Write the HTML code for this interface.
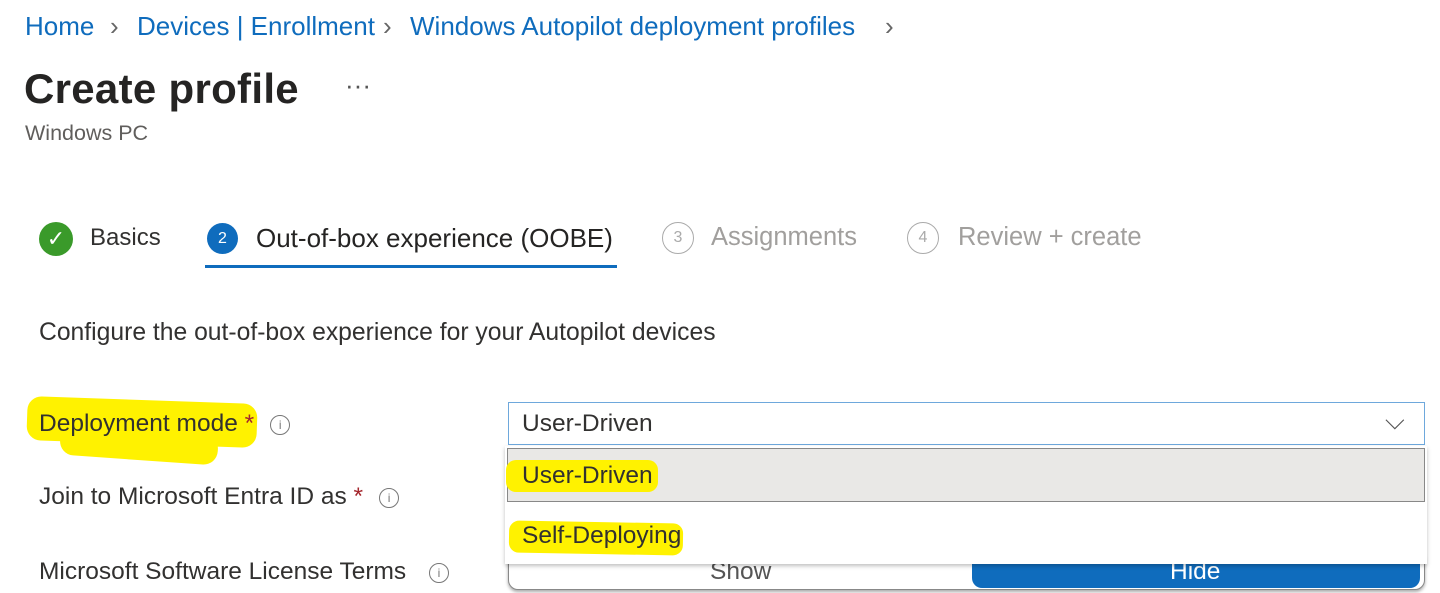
<!DOCTYPE html>
<html><head><style>
body{margin:0;width:1440px;height:593px;overflow:hidden;background:#fff;font-family:"Liberation Sans",sans-serif;position:relative;color:#323130}
.a{position:absolute;white-space:nowrap}
.bc{top:11px;font-size:26px;color:#0f6cbd}
.sep{top:11px;font-size:26px;color:#666}
.hl{position:absolute;background:#fff200;border-radius:14px}
.info{display:inline-block;width:18px;height:18px;border:1.5px solid #777;border-radius:50%;vertical-align:middle;margin-left:16px;font-size:12px;text-align:center;line-height:18px;color:#777}
.t{font-size:24.5px}
</style></head><body>
<div class="a bc" style="left:25px">Home</div>
<div class="a sep" style="left:110px">›</div>
<div class="a bc" style="left:137px">Devices | Enrollment</div>
<div class="a sep" style="left:383px">›</div>
<div class="a bc" style="left:410px">Windows Autopilot deployment profiles</div>
<div class="a sep" style="left:885px">›</div>
<div class="a" style="top:65px;left:24px;font-size:42px;font-weight:bold;color:#252423;letter-spacing:0.3px">Create profile</div>
<div class="a" style="top:70px;left:345px;font-size:26px;color:#555">···</div>
<div class="a" style="top:121px;left:25px;font-size:21.5px;color:#605e5c">Windows PC</div>
<div class="a" style="top:222px;left:39px;width:34px;height:34px;border-radius:50%;background:#3a9a2a;color:#fff;font-size:22px;text-align:center;line-height:34px">✓</div>
<div class="a" style="top:224px;left:90px;font-size:24px">Basics</div>
<div class="a" style="top:223px;left:207px;width:31px;height:31px;border-radius:50%;background:#0f6cbd;color:#fff;font-size:16px;text-align:center;line-height:31px">2</div>
<div class="a" style="top:223px;left:256px;font-size:26px;color:#252423">Out-of-box experience (OOBE)</div>
<div class="a" style="top:265px;left:205px;width:412px;height:3px;background:#0f6cbd"></div>
<div class="a" style="top:222px;left:662px;width:30px;height:30px;border-radius:50%;border:1.5px solid #aaa;color:#aaa;font-size:16px;text-align:center;line-height:30px">3</div>
<div class="a" style="top:223px;left:711px;font-size:25.5px;color:#a19f9d">Assignments</div>
<div class="a" style="top:222px;left:907px;width:30px;height:30px;border-radius:50%;border:1.5px solid #aaa;color:#aaa;font-size:16px;text-align:center;line-height:30px">4</div>
<div class="a" style="top:223px;left:958px;font-size:25.5px;color:#a19f9d">Review + create</div>
<div class="a" style="top:319px;left:39px;font-size:24.7px">Configure the out-of-box experience for your Autopilot devices</div>
<div class="hl" style="top:400px;left:27px;width:230px;height:44px;transform:rotate(2deg)"></div>
<div class="hl" style="top:430px;left:60px;width:158px;height:30px;transform:rotate(4deg)"></div>
<div class="a t" style="top:410px;left:39px">Deployment mode <span style="color:#a4262c">*</span><span class="info">i</span></div>
<div class="a t" style="top:483px;left:39px">Join to Microsoft Entra ID as <span style="color:#a4262c">*</span><span class="info">i</span></div>
<div class="a t" style="top:558px;left:39px">Microsoft Software License Terms <span class="info">i</span></div>
<div class="a" style="top:402px;left:508px;width:915px;height:41px;border:1.5px solid #6ea8dc;background:#fff"></div>
<div class="a t" style="top:410px;left:522px">User-Driven</div>
<div class="a" style="top:405px;left:1385px;font-size:26px;color:#555">⌵</div>
<div class="a" style="top:548px;left:508px;width:915px;height:40px;border:1.5px solid #888;border-radius:10px;background:#fff;box-shadow:0 2px 3px #aaa"></div>
<div class="a" style="top:552px;left:972px;width:448px;height:36px;border-radius:10px;background:#0f6cbd"></div>
<div class="a t" style="top:558px;left:710px;color:#555">Show</div>
<div class="a t" style="top:558px;left:1170px;color:#fff">Hide</div>
<div class="a" style="top:446px;left:505px;width:922px;height:118px;background:#fff;box-shadow:0 2px 4px rgba(0,0,0,.25)"></div>
<div class="a" style="top:448px;left:507px;width:918px;height:54px;background:#e9e8e6;border:1.5px solid #888;box-sizing:border-box"></div>
<div class="hl" style="top:460px;left:506px;width:152px;height:32px;border-radius:10px"></div>
<div class="hl" style="top:522px;left:509px;width:174px;height:32px;border-radius:10px;transform:rotate(1deg)"></div>
<div class="a t" style="top:462px;left:522px">User-Driven</div>
<div class="a t" style="top:522px;left:522px">Self-Deploying</div>
</body></html>
